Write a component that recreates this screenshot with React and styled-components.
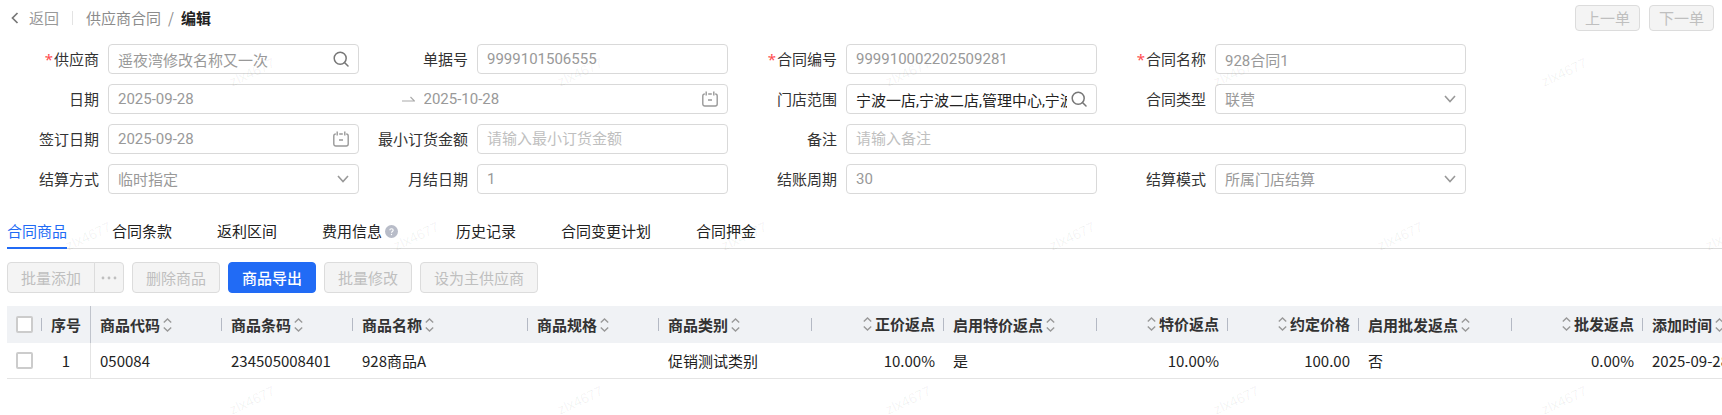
import React, { useState } from "react";
import styled, { createGlobalStyle, css } from "styled-components";

const GlobalStyle = createGlobalStyle`
  html,
  body {
    margin: 0;
    padding: 0;
    background: #fff;
  }
  * {
    box-sizing: border-box;
  }
  body,
  button,
  input,
  select {
    font-family: "Noto Sans CJK SC", sans-serif;
    font-size: 15px;
    line-height: 20px;
  }
`;

const Page = styled.div`
  position: relative;
  min-height: 100vh;
  overflow: hidden;
  color: #222;
`;

const Header = styled.header`
  display: flex;
  align-items: center;
  justify-content: space-between;
  height: 36px;
  padding: 0 8px 0 10px;
`;

const Crumbs = styled.nav`
  display: flex;
  align-items: center;
  color: #8c8c8c;
`;

const Back = styled.a`
  display: flex;
  align-items: center;
  gap: 10px;
  color: #999;
  text-decoration: none;
`;

const Split = styled.span`
  width: 1px;
  height: 14px;
  margin: 0 13px;
  background: #e3e3e3;
`;

const CrumbLink = styled.a`
  color: #8c8c8c;
  text-decoration: none;
`;

const Slash = styled.span`
  margin: 0 7px;
`;

const Current = styled.span`
  color: #222;
  font-weight: 700;
`;

const Group = styled.div`
  display: flex;
  gap: 9px;
`;

const Button = styled.button`
  display: inline-flex;
  align-items: center;
  justify-content: center;
  height: ${(p) => (p.$small ? 26 : 31)}px;
  padding: 0 ${(p) => (p.$small ? 9 : 13)}px;
  border: 1px solid #dcdcdc;
  border-radius: 4px;
  background: #f4f4f4;
  color: #bfbfbf;
  white-space: nowrap;
  ${(p) =>
    p.$primary &&
    css`
      border-color: #216bf5;
      background: #216bf5;
      color: #fff;
      font-weight: 500;
      cursor: pointer;
    `}
`;

const ButtonPair = styled.div`
  display: flex;
  ${Button}:first-child {
    border-radius: 4px 0 0 4px;
  }
  ${Button}:last-child {
    width: 30px;
    margin-left: -1px;
    padding: 0;
    border-radius: 0 4px 4px 0;
  }
`;

const Form = styled.form`
  display: grid;
  grid-template-columns: repeat(4, minmax(0, 1fr));
  gap: 10px 18px;
  max-width: 1466px;
  padding: 8px 0 0 8px;
`;

const Field = styled.div`
  display: grid;
  grid-template-columns: 91px minmax(0, 1fr);
  align-items: center;
  gap: 9px;
  grid-column: span ${(p) => p.$span || 1};
`;

const Label = styled.label`
  color: #333;
  text-align: right;
  white-space: nowrap;
`;

const Star = styled.span`
  margin-right: 1px;
  color: #ff4d4f;
  font-family: "Noto Sans", sans-serif;
`;

const Box = styled.div`
  display: flex;
  align-items: center;
  height: 30px;
  padding: 0 9px;
  border: 1px solid #d9d9d9;
  border-radius: 4px;
  background: #fff;
  > svg {
    flex: none;
    margin-left: 4px;
  }
`;

const Input = styled.input`
  flex: 1;
  width: 0;
  min-width: 0;
  height: 28px;
  padding: 0;
  border: 0;
  outline: 0;
  background: transparent;
  color: ${(p) => (p.$dark ? "#222" : "#999")};
  font-family: Roboto, "Noto Sans CJK SC", sans-serif;
  &::placeholder {
    color: #bfbfbf;
    opacity: 1;
  }
`;

const Select = styled.select`
  flex: 1;
  min-width: 0;
  height: 28px;
  padding: 0;
  border: 0;
  outline: 0;
  appearance: none;
  background: transparent;
  color: #999;
  opacity: 1;
`;

const ArrowWrap = styled.span`
  display: flex;
  margin: 0 9px;
`;

const Tabs = styled.div`
  display: flex;
  gap: 45px;
  margin: 21px 0 0 7px;
  border-bottom: 1px solid #dcdcdc;
`;

const Tab = styled.button`
  display: flex;
  align-items: center;
  height: 34px;
  margin-bottom: -1px;
  padding: 0;
  border: 0;
  border-bottom: 2px solid ${(p) => (p.$active ? "#216bf5" : "transparent")};
  background: none;
  color: ${(p) => (p.$active ? "#216bf5" : "#222")};
  cursor: pointer;
  svg {
    margin: 0 13px 0 3px;
  }
`;

const Toolbar = styled.div`
  display: flex;
  gap: 8px;
  padding: 13px 7px;
`;

const TableWrap = styled.div`
  margin-left: 7px;
  overflow: hidden;
`;

const Table = styled.table`
  width: 1789px;
  border-collapse: separate;
  border-spacing: 0;
  table-layout: fixed;
`;

const Th = styled.th`
  position: relative;
  height: 37px;
  padding: 0 9px;
  background: #f0f2f5;
  color: #333;
  font-weight: 700;
  text-align: ${(p) => p.$align || "left"};
  white-space: nowrap;
  ${(p) =>
    p.$frozen
      ? css`
          border-right: 1px solid #c0c4cc;
        `
      : css`
          &::after {
            content: "";
            position: absolute;
            top: 12px;
            right: 0;
            width: 1px;
            height: 13px;
            background: #b4b9c4;
          }
        `}
`;

const ThInner = styled.span`
  display: inline-flex;
  align-items: center;
  gap: 3px;
  flex-direction: ${(p) => (p.$reverse ? "row-reverse" : "row")};
`;

const Td = styled.td`
  height: 36px;
  padding: 0 9px;
  border-bottom: 1px solid #e4e4e4;
  border-right: ${(p) => (p.$frozen ? "1px solid #e4e4e4" : "0")};
  text-align: ${(p) => p.$align || "left"};
  white-space: nowrap;
`;

const Checkbox = styled.input.attrs({ type: "checkbox" })`
  display: block;
  width: 17px;
  height: 17px;
  margin: 0;
  appearance: none;
  border: 2px solid #ccc;
  border-radius: 2px;
  background: #fff;
  &:checked {
    border-color: #216bf5;
    background: #216bf5;
  }
`;

const Watermark = styled.div`
  position: absolute;
  inset: 0;
  overflow: hidden;
  pointer-events: none;
`;

const Mark = styled.span`
  position: absolute;
  color: rgba(0, 0, 0, 0.06);
  font-family: "Liberation Sans", Arial, sans-serif;
  font-size: 14px;
  line-height: 16px;
  transform: rotate(-25deg);
`;

const SearchIcon = () => (
  <svg width="16" height="16" viewBox="0 0 16 16" fill="none" stroke="#777" strokeWidth="1.5">
    <circle cx="7.2" cy="7.2" r="6" />
    <path d="M11.5 11.5L15 15" strokeLinecap="round" />
  </svg>
);

const CalendarIcon = () => (
  <svg width="16" height="16" viewBox="0 0 16 16" fill="none" stroke="#999" strokeWidth="1.4">
    <path d="M2.8 3A2 2 0 0 0 .8 5V13A2 2 0 0 0 2.8 15H13.2A2 2 0 0 0 15.2 13V5A2 2 0 0 0 13.2 3M6.2 3H9.8" />
    <path d="M4.2 .5V4.5M11.8 .5V4.5M6 9H10" />
  </svg>
);

const DownIcon = () => (
  <svg width="12" height="8" viewBox="0 0 12 8" fill="none" stroke="#999" strokeWidth="1.6">
    <path d="M1 1L6 6.5L11 1" />
  </svg>
);

const BackIcon = () => (
  <svg width="9" height="12" viewBox="0 0 9 12" fill="none" stroke="#777" strokeWidth="1.7">
    <path d="M7.5 1L2.5 6L7.5 11" />
  </svg>
);

const ArrowIcon = () => (
  <svg width="13" height="6" viewBox="0 0 13 6" fill="none" stroke="#aaa" strokeWidth="1.2">
    <path d="M0 5H12.5L8.5 1" />
  </svg>
);

const SortIcon = () => (
  <svg width="9" height="14" viewBox="0 0 9 14" fill="none" stroke="#999" strokeWidth="1.4">
    <path d="M.8 4.5L4.5 1L8.2 4.5M.8 9.5L4.5 13L8.2 9.5" />
  </svg>
);

const HelpIcon = () => (
  <svg width="13" height="13" viewBox="0 0 13 13">
    <circle cx="6.5" cy="6.5" r="6.5" fill="#b8bcc8" />
    <path
      d="M4.8 5.3C4.8 3.2 8.2 3.2 8.2 5.3C8.2 6.5 6.5 6.5 6.5 7.8"
      fill="none"
      stroke="#fff"
      strokeWidth="1.1"
    />
    <circle cx="6.5" cy="9.5" r=".7" fill="#fff" />
  </svg>
);

const MoreIcon = () => (
  <svg width="16" height="4" viewBox="0 0 16 4" fill="#bfbfbf">
    <circle cx="2" cy="2" r="1.4" />
    <circle cx="8" cy="2" r="1.4" />
    <circle cx="14" cy="2" r="1.4" />
  </svg>
);

const icons = { search: <SearchIcon />, date: <CalendarIcon /> };

const fields = [
  { id: "supplier", label: "供应商", required: true, value: "遥夜湾修改名称又一次", icon: "search" },
  { id: "billNo", label: "单据号", value: "9999101506555" },
  { id: "contractNo", label: "合同编号", required: true, value: "999910002202509281" },
  { id: "contractName", label: "合同名称", required: true, value: "928合同1" },
  { id: "period", label: "日期", value: "2025-09-28", end: "2025-10-28", icon: "date", span: 2 },
  { id: "stores", label: "门店范围", value: "宁波一店,宁波二店,管理中心,宁波三店", icon: "search", dark: true },
  { id: "type", label: "合同类型", value: "联营", select: true },
  { id: "signDate", label: "签订日期", value: "2025-09-28", icon: "date" },
  { id: "minAmount", label: "最小订货金额", placeholder: "请输入最小订货金额" },
  { id: "remark", label: "备注", placeholder: "请输入备注", span: 2 },
  { id: "settleWay", label: "结算方式", value: "临时指定", select: true },
  { id: "monthDay", label: "月结日期", value: "1" },
  { id: "cycle", label: "结账周期", value: "30" },
  { id: "settleMode", label: "结算模式", value: "所属门店结算", select: true },
];

const tabs = ["合同商品", "合同条款", "返利区间", "费用信息", "历史记录", "合同变更计划", "合同押金"];

const columns = [
  { title: "商品代码", width: 131, value: "050084" },
  { title: "商品条码", width: 131, value: "234505008401" },
  { title: "商品名称", width: 175, value: "928商品A" },
  { title: "商品规格", width: 131, value: "" },
  { title: "商品类别", width: 153, value: "促销测试类别" },
  { title: "正价返点", width: 132, value: "10.00%", align: "right" },
  { title: "启用特价返点", width: 153, value: "是" },
  { title: "特价返点", width: 131, value: "10.00%", align: "right" },
  { title: "约定价格", width: 131, value: "100.00", align: "right" },
  { title: "启用批发返点", width: 153, value: "否" },
  { title: "批发返点", width: 131, value: "0.00%", align: "right" },
  { title: "添加时间", width: 153, value: "2025-09-28" },
];

// every other row of marks is shifted by half a step
const marks = [];
[64, 228, 392].forEach((top, row) => {
  const shifted = row % 2 === 1;
  for (let i = 0; i < (shifted ? 6 : 5); i++) {
    marks.push({ top, left: (shifted ? 64 : 228) + i * 328 });
  }
});

function FormField({ field }) {
  const { id, label, required, value, end, placeholder, icon, select, dark, span } = field;
  return (
    <Field $span={span}>
      <Label htmlFor={id}>
        {required && <Star>*</Star>}
        {label}
      </Label>
      <Box>
        {select ? (
          <>
            <Select id={id} defaultValue={value}>
              <option>{value}</option>
            </Select>
            <DownIcon />
          </>
        ) : (
          <Input id={id} defaultValue={value} placeholder={placeholder} $dark={dark} />
        )}
        {end && (
          <>
            <ArrowWrap>
              <ArrowIcon />
            </ArrowWrap>
            <Input aria-label="结束日期" defaultValue={end} />
          </>
        )}
        {icons[icon]}
      </Box>
    </Field>
  );
}

function App() {
  const [active, setActive] = useState("合同商品");
  return (
    <Page>
      <GlobalStyle />
      <Header>
        <Crumbs>
          <Back href="#back">
            <BackIcon />
            返回
          </Back>
          <Split />
          <CrumbLink href="#contracts">供应商合同</CrumbLink>
          <Slash>/</Slash>
          <Current>编辑</Current>
        </Crumbs>
        <Group>
          <Button $small disabled>
            上一单
          </Button>
          <Button $small disabled>
            下一单
          </Button>
        </Group>
      </Header>
      <Form>
        {fields.map((f) => (
          <FormField key={f.id} field={f} />
        ))}
      </Form>
      <Tabs role="tablist">
        {tabs.map((t) => (
          <Tab key={t} role="tab" aria-selected={t === active} $active={t === active} onClick={() => setActive(t)}>
            {t}
            {t === "费用信息" && <HelpIcon />}
          </Tab>
        ))}
      </Tabs>
      <Toolbar>
        <ButtonPair>
          <Button disabled>批量添加</Button>
          <Button disabled aria-label="更多">
            <MoreIcon />
          </Button>
        </ButtonPair>
        <Button disabled>删除商品</Button>
        <Button $primary>商品导出</Button>
        <Button disabled>批量修改</Button>
        <Button disabled>设为主供应商</Button>
      </Toolbar>
      <TableWrap>
        <Table>
          <colgroup>
            <col width="35" />
            <col width="49" />
            {columns.map((c) => (
              <col key={c.title} width={c.width} />
            ))}
          </colgroup>
          <thead>
            <tr>
              <Th>
                <Checkbox aria-label="全选" />
              </Th>
              <Th $frozen $align="center">
                序号
              </Th>
              {columns.map((c) => (
                <Th key={c.title} $align={c.align}>
                  <ThInner $reverse={c.align === "right"}>
                    {c.title}
                    <SortIcon />
                  </ThInner>
                </Th>
              ))}
            </tr>
          </thead>
          <tbody>
            <tr>
              <Td>
                <Checkbox aria-label="选择第1行" />
              </Td>
              <Td $frozen $align="center">
                1
              </Td>
              {columns.map((c) => (
                <Td key={c.title} $align={c.align}>
                  {c.value}
                </Td>
              ))}
            </tr>
          </tbody>
        </Table>
      </TableWrap>
      <Watermark aria-hidden="true">
        {marks.map((m) => (
          <Mark key={`${m.top}-${m.left}`} style={{ top: m.top, left: m.left }}>
            zlx4677
          </Mark>
        ))}
      </Watermark>
    </Page>
  );
}

export default App;
